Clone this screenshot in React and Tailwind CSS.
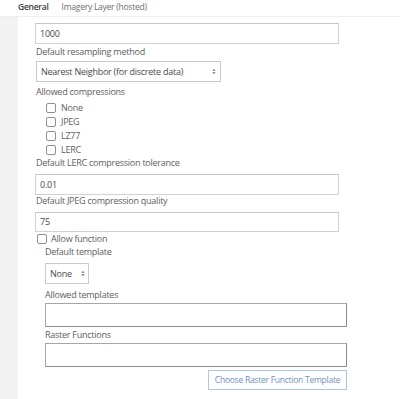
import React from 'react';

const font = { fontFamily: '"Open Sans", Lato, sans-serif' };

const Box = () => (
  <span className="inline-block w-[10px] h-[10px] border border-[#8f8f8f] rounded-[2px] bg-white shrink-0" />
);

const Arrows = () => (
  <svg width="4" height="7" viewBox="0 0 6 9" className="shrink-0">
    <path d="M0.5 3.5 L3 0.8 L5.5 3.5 Z" fill="#666" />
    <path d="M0.5 5.5 L3 8.2 L5.5 5.5 Z" fill="#666" />
  </svg>
);

const Label = ({ children, className = '' }) => (
  <div className={`text-[9px] tracking-[-0.25px] leading-[12px] text-[#606060] ${className}`}>{children}</div>
);

const TextInput = ({ value, className = '' }) => (
  <div className={`w-[304px] border border-[#d2d2d2] border-t-[#c6c6c6] bg-white px-[4px] flex items-center text-[9px] tracking-[-0.25px] text-[#4a4a4a] ${className}`}>
    {value}
  </div>
);

const App = () => {
  const compressions = ['None', 'JPEG', 'LZ77', 'LERC'];

  return (
    <div className="w-[400px] h-[399px] bg-white flex flex-col overflow-hidden whitespace-nowrap" style={font}>
      {/* tab strip */}
      <div className="h-[17px] shrink-0 flex items-start border-b border-[#efefef] leading-[14px] tracking-[-0.25px]">
        <span className="ml-[18px] text-[8.5px] font-semibold text-[#3a3a3a]">General</span>
        <span className="ml-[13px] text-[8.5px] text-[#6e6e6e]">Imagery Layer (hosted)</span>
      </div>

      <div className="flex flex-1">
        <div className="w-[18px] bg-[#f3f3f3] shrink-0" />
        <div className="flex-1 flex flex-col pl-[17px]">
          <TextInput value="1000" className="mt-[6px] h-[21px]" />
          <Label className="pt-[2px] ml-[1px] leading-[11px]">Default resampling method</Label>

          <div className="mt-[3px] ml-[1px] w-[185px] h-[21px] border border-[#cacaca] flex items-center justify-between pl-[4px] pr-[4px] text-[9px] tracking-[-0.25px] text-[#4a4a4a]">
            <span>Nearest Neighbor (for discrete data)</span>
            <Arrows />
          </div>

          <Label className="mt-[4px] ml-[1px]">Allowed compressions</Label>
          <div className="flex flex-col ml-[11px] mt-[3px]">
            {compressions.map((c) => (
              <div key={c} className="h-[14px] flex items-center gap-[5px] text-[9px] tracking-[-0.25px] text-[#606060]">
                <Box />
                <span>{c}</span>
              </div>
            ))}
          </div>

          <Label className="ml-[1px]">Default LERC compression tolerance</Label>
          <TextInput value="0.01" className="mt-[5px] h-[21px]" />
          <Label className="ml-[1px] leading-[11px]">Default JPEG compression quality</Label>
          <TextInput value="75" className="mt-[5px] h-[20px]" />

          <div className="h-[13px] flex items-center gap-[4px] ml-[2px] text-[9px] tracking-[-0.25px] text-[#606060]">
            <Box />
            <span>Allow function</span>
          </div>

          <div className="ml-[10px] flex flex-col">
            <Label className="mt-[1px]">Default template</Label>
            <div className="mt-[5px] w-[44px] h-[21px] border border-[#cacaca] flex items-center justify-between pl-[4px] pr-[3px] text-[9px] tracking-[-0.25px] text-[#4a4a4a]">
              <span>None</span>
              <Arrows />
            </div>
            <Label className="mt-[5px]">Allowed templates</Label>
            <div className="mt-[2px] w-[302px] h-[24px] border border-[#a6a6a6] border-b-[#8c8c8c] border-r-[#8c8c8c] bg-white" />
            <Label className="mt-[2px]">Raster Functions</Label>
            <div className="mt-[2px] w-[302px] h-[24px] border border-[#a6a6a6] border-b-[#8c8c8c] border-r-[#8c8c8c] bg-white" />
            <div className="mt-[3px] ml-[163px] w-[139px] h-[20px] border border-[#a8c8ec] flex items-center justify-center text-[8.5px] tracking-[-0.25px] text-[#7090c0]">
              Choose Raster Function Template
            </div>
          </div>
        </div>
      </div>
    </div>
  );
};

export default App;
